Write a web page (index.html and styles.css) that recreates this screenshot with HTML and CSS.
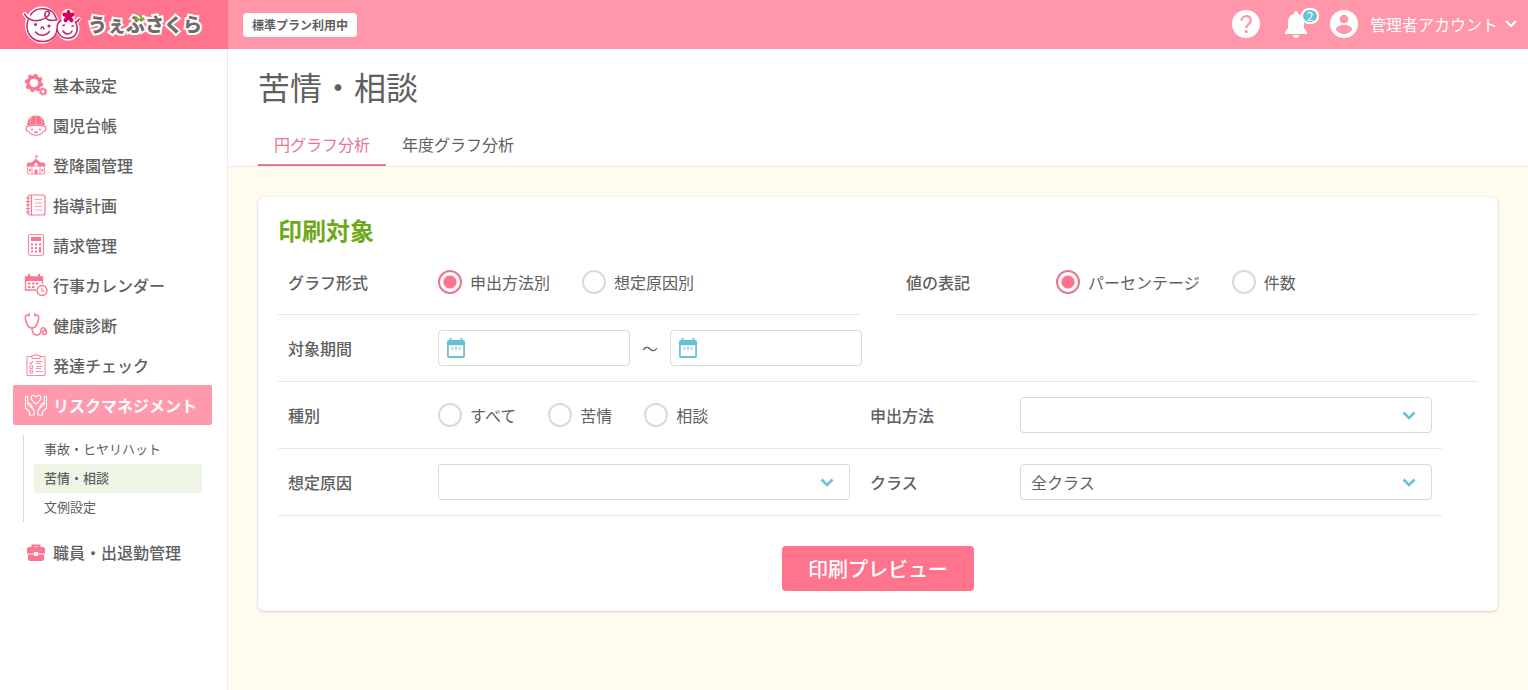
FILE: index.html
```html
<!DOCTYPE html>
<html lang="ja">
<head>
<meta charset="utf-8">
<title>苦情・相談</title>
<link rel="stylesheet" href="styles.css">
</head>
<body>
<header class="topbar">
  <a class="brand" href="#">
    <svg class="brand-mark" viewBox="0 0 60 44" aria-hidden="true">
      <g fill="#fff" stroke="#fff" stroke-width="4" stroke-linejoin="round" stroke-linecap="round">
        <ellipse cx="20" cy="22" rx="15" ry="16.500"/><circle cx="46" cy="26" r="9.500"/><circle cx="46" cy="13" r="5"/>
        <path fill="none" d="M2.500 11c3 4 6 6 9 6M53 19c2 0 3-1 3.500-3"/>
      </g>
      <g fill="none" stroke="#c2266f" stroke-width="1.500" stroke-linecap="round">
        <path d="M2.500 11c3 6 10 8 16 6 6-1.500 10-5 8.500-8-1.500-2-5 0-4 4s6 5 12 4"/>
        <path d="M8.500 12C14 3 31 3 34.500 16M6 17C2 29 10 38.500 20.500 38.500c8 0 14-5 14.500-12"/>
        <path d="M39 18c-4 1-5 7-3 11 4 9 17 8 19-1 .6-3 .2-6-1.500-9 2 0 3-1 3.500-3"/>
        <path d="M13.500 29c4 4.500 10 4.500 14-.5M19 25.500c.5-2 2.500-2 3 .5M41 28c2.500 4 7 4 9 0M41 22.500l1.500-.5M50 23h1.500"/>
      </g>
      <g fill="#c2266f"><circle cx="13.500" cy="21.500" r="1.600"/><circle cx="27" cy="23" r="1.600"/></g>
      <path d="M46.500 13.500V9M46.500 13.500l4.200-2M46.500 13.500l3 3.800M46.500 13.500l-3 3.800M46.500 13.500l-4.200-2" stroke="#d4005f" stroke-width="4" stroke-linecap="round" fill="none"/>
    </svg>
    <span class="brand-name">うぇぶさくら<svg class="brand-accent" viewBox="0 0 12 8" aria-hidden="true"><path d="M6 1.500l3 4M2 3l2 3" stroke="#7fc31c" stroke-width="2.200" stroke-linecap="round"/></svg></span>
  </a>
  <span class="plan">標準プラン利用中</span>
  <div class="tools">
    <button class="tool" type="button" aria-label="ヘルプ">
      <svg viewBox="0 0 28 28" class="ico28"><circle cx="14" cy="14" r="14" fill="#fff"/><path d="M9.500 10.800c0-6.200 9.300-6.100 9.300-.4 0 3.600-4.600 3.800-4.600 7.600" fill="none" stroke="#ff96a9" stroke-width="2.300"/><circle cx="14.200" cy="21.500" r="1.600" fill="#ff96a9"/></svg>
    </button>
    <button class="tool bell" type="button" aria-label="お知らせ">
      <svg viewBox="0 0 24 28" class="ico-bell"><path fill="#fff" d="M12 1c1.300 0 2 .8 2 2v1c4 1 6 4 6 8v6l3 4v2H1v-2l3-4v-6c0-4 2-7 6-8V3c0-1.200.7-2 2-2zM9 25h6c0 4-6 4-6 0z"/></svg>
      <span class="badge">2</span>
    </button>
    <button class="account" type="button">
      <svg viewBox="0 0 28 28" class="ico28" aria-hidden="true"><circle cx="14" cy="14" r="14" fill="#fff"/><circle cx="14" cy="9" r="4.300" fill="#ff96a9"/><path d="M5.500 19c2-3.300 5.500-4.300 8.500-4.300s6.500 1 8.500 4.300c-2 3.300-5 5-8.500 5s-6.500-1.700-8.500-5z" fill="#ff96a9"/></svg>
      <span>管理者アカウント</span>
      <svg viewBox="0 0 14 10" class="ico-caret" aria-hidden="true"><path d="M2 2l5 5 5-5" fill="none" stroke="#fff" stroke-width="2.200"/></svg>
    </button>
  </div>
</header>
<div class="shell">
  <nav class="sidebar">
    <a class="nav" href="#"><svg viewBox="0 0 24 24"><circle cx="10" cy="10" r="6" fill="none" stroke="#fb7590" stroke-width="3.400"/><circle cx="10" cy="10" r="8" fill="none" stroke="#fb7590" stroke-width="2.400" stroke-dasharray="3.280 3"/><circle cx="19" cy="18.500" r="2.500" fill="none" stroke="#fb7590" stroke-width="1.700"/><circle cx="19" cy="18.500" r="3.500" fill="none" stroke="#fb7590" stroke-width="1.200" stroke-dasharray="1.500 1.250"/></svg>基本設定</a>
    <a class="nav" href="#"><svg viewBox="0 0 24 24"><path fill="#fb7590" d="M3 12.500C3.500 5.500 7 2.500 12 2.500s8.500 3 9 10c-6-1.500-12-1.500-18 0z"/><path d="M12 1.500v9M8 3.500C6.500 6 6 8 6 11M16 3.500C17.500 6 18 8 18 11" fill="none" stroke="#ffc0cb" stroke-width=".7"/><path d="M1.500 14c6-2.500 15-2.500 21 0M3 15c-2 0-1 3.500 1.800 3.500 3 5 11.400 5 14.400 0C22 18.500 23 15 21 15" fill="none" stroke="#fb7590" stroke-width="1.100"/><circle cx="8" cy="16.500" r="1.100" fill="#fb7590"/><circle cx="16" cy="16.500" r="1.100" fill="#fb7590"/><path d="M10 18.500h4c0 2.500-4 2.500-4 0z" fill="#fb7590"/></svg>園児台帳</a>
    <a class="nav" href="#"><svg viewBox="0 0 24 24"><path fill="#fb7590" d="M11.500 2l3.500 1.300-2.700 1.200V6l4.200 3.500H20L21.500 12v1.500h-19V12L4 9.500h3.500L11.500 6z"/><path d="M3.500 13.500V21h17v-7.500M8 12v9M16 12v9" fill="none" stroke="#fb8ba1" stroke-width="1"/><circle cx="12" cy="11.500" r="1.800" fill="#fff"/><path fill="#fb7590" d="M10.500 16.500h3V21h-3zM5 16h1.800v2.500H5zM17.500 16h1.800v2.500h-1.800z"/></svg>登降園管理</a>
    <a class="nav" href="#"><svg viewBox="0 0 24 24" fill="none" stroke="#fb7590" stroke-width="1.200"><rect x="4" y="2" width="17" height="20" rx="2"/><path d="M7.500 2v20M2 5h4M2 8.500h4M2 12h4M2 15.500h4M2 19h4"/><path d="M10.500 6.500h7.500M10.500 10h7.500M10.500 13.500h7.500M10.500 17h7.500" stroke="#fca0b0" stroke-width="1"/></svg>指導計画</a>
    <a class="nav" href="#"><svg viewBox="0 0 24 24"><rect x="4.500" y="1.500" width="15" height="21" rx="2" fill="none" stroke="#fb8ba1" stroke-width="1.200"/><path fill="#fb7590" d="M7 4h10v4H7z"/><path d="M8 10.500v9M12 10.500v9" stroke="#fb7590" stroke-width="2" stroke-dasharray="2 1.500"/><path d="M16 10.500v2M16 14v5.500" stroke="#fb7590" stroke-width="2"/></svg>請求管理</a>
    <a class="nav" href="#"><svg viewBox="0 0 24 24"><path fill="none" stroke="#fb7590" stroke-width="1.300" d="M12 17H1.500V4h17v7"/><path fill="#fb7590" d="M1 4h18v4H1zM4 1h2v4H4zM14 1h2v4h-2z"/><path d="M4 10.500h11M4 14h8" stroke="#fb7590" stroke-width="2" stroke-dasharray="2.400 1.500"/><circle cx="18" cy="17.500" r="5" fill="#fff" stroke="#fb7590" stroke-width="1.300"/><path d="M18 14.500v3.500h2.500" fill="none" stroke="#fb7590" stroke-width="1.100"/></svg>行事カレンダー</a>
    <a class="nav" href="#"><svg viewBox="0 0 24 24" fill="none" stroke="#fb7590" stroke-width="1.500" stroke-linecap="round"><path d="M5 2H3C1 2 1 5 2 8c1 4 2 7 6 7s5-3 6-7c1-3 1-6-1-6h-2M8 15c0 9 9 9 9 2 0-3 5-3 5 1"/><circle cx="20.500" cy="19.500" r="2"/><path d="M5 1v2M11 1v2"/></svg>健康診断</a>
    <a class="nav" href="#"><svg viewBox="0 0 24 24" fill="none" stroke="#fb8ba1" stroke-width="1.100"><rect x="3" y="3.500" width="18" height="19" rx="1"/><path fill="#fff" d="M8 5.500v-3h2.500c.5-2 2.500-2 3 0H16v3z"/><path d="M5.500 9.500l1.500 1.500 2-3M12 8.500h6.500M12 10.500h5M12 13.500h6.500M12 15.500h5M12 18.500h6.500"/><path d="M6 13h2.500v2.500H6zM6 17.500h2.500V20H6z"/></svg>発達チェック</a>
    <a class="nav nav-active" href="#"><svg viewBox="0 0 24 24" fill="none" stroke="#fff" stroke-width="1.100" stroke-linejoin="round"><path d="M12 11C9 8.500 7 7 7 4.800 7 2 10.500 1.700 12 4c1.500-2.300 5-2 5 .8 0 2.200-2 3.700-5 6.200z"/><path d="M5.500 22v-3L1.500 15V4.500c0-1.700 2.200-1.700 2.200 0v6.500l5 4.500c1 1 1.500 2 1.500 3.500v3zM4 11c1-1.500 2.500-.5 3 1l1.700 2.500M18.500 22v-3l4-4V4.500c0-1.700-2.200-1.700-2.200 0v6.500l-5 4.500c-1 1-1.500 2-1.500 3.500v3zM20 11c-1-1.500-2.500-.5-3 1l-1.700 2.500"/></svg>リスクマネジメント</a>
    <div class="subnav">
      <a href="#">事故・ヒヤリハット</a>
      <a class="sub-active" href="#">苦情・相談</a>
      <a href="#">文例設定</a>
    </div>
    <a class="nav" href="#"><svg viewBox="0 0 24 24"><path d="M8.500 7.500V5.500h7v2" fill="none" stroke="#fb7590" stroke-width="2"/><path fill="#fb7590" d="M5 7h14a2 2 0 0 1 2 2v4.500h-7V12h-4v1.500H3V9a2 2 0 0 1 2-2zM4 14.500h6V16h4v-1.500h6V19a2 2 0 0 1-2 2H6a2 2 0 0 1-2-2z"/></svg>職員・出退勤管理</a>
  </nav>
  <main class="main">
    <div class="page-head">
      <h1>苦情・相談</h1>
      <div class="tabs">
        <a class="tab tab-on" href="#">円グラフ分析</a>
        <a class="tab" href="#">年度グラフ分析</a>
      </div>
    </div>
    <form class="card">
      <h2>印刷対象</h2>
      <div class="pair pair-split">
        <div class="field" role="radiogroup" aria-labelledby="l1">
          <span class="label" id="l1">グラフ形式</span>
          <div class="options">
            <label><input type="radio" name="type" checked>申出方法別</label>
            <label><input type="radio" name="type">想定原因別</label>
          </div>
        </div>
        <div class="field" role="radiogroup" aria-labelledby="l2">
          <span class="label" id="l2">値の表記</span>
          <div class="options">
            <label><input type="radio" name="unit" checked>パーセンテージ</label>
            <label><input type="radio" name="unit">件数</label>
          </div>
        </div>
      </div>
      <div class="field">
        <label class="label" for="from">対象期間</label>
        <div class="range">
          <div class="date"><svg viewBox="0 0 20 22" aria-hidden="true"><path fill="#6bc0d6" fill-rule="evenodd" d="M3 0h2v2h10V0h2v2h1a2 2 0 0 1 2 2v16a2 2 0 0 1-2 2H2a2 2 0 0 1-2-2V4a2 2 0 0 1 2-2h1zM2 8v12h16V8z"/><path d="M5 11.500h2M9 11.500h2M13 11.500h2" stroke="#6bc0d6" stroke-width="2"/></svg><input id="from" type="text"></div>
          <span class="tilde">～</span>
          <div class="date"><svg viewBox="0 0 20 22" aria-hidden="true"><path fill="#6bc0d6" fill-rule="evenodd" d="M3 0h2v2h10V0h2v2h1a2 2 0 0 1 2 2v16a2 2 0 0 1-2 2H2a2 2 0 0 1-2-2V4a2 2 0 0 1 2-2h1zM2 8v12h16V8z"/><path d="M5 11.500h2M9 11.500h2M13 11.500h2" stroke="#6bc0d6" stroke-width="2"/></svg><input type="text" aria-label="対象期間（終了）"></div>
        </div>
      </div>
      <div class="pair pair-joined">
        <div class="field" role="radiogroup" aria-labelledby="l3">
          <span class="label" id="l3">種別</span>
          <div class="options">
            <label><input type="radio" name="kind">すべて</label>
            <label><input type="radio" name="kind">苦情</label>
            <label><input type="radio" name="kind">相談</label>
          </div>
        </div>
        <div class="field">
          <label class="label" for="method">申出方法</label>
          <div class="select"><select id="method"><option></option></select><svg viewBox="0 0 14 10" aria-hidden="true"><path d="M1.500 1.500L7 7l5.500-5.500" fill="none" stroke="#6bc0d6" stroke-width="2.600"/></svg></div>
        </div>
      </div>
      <div class="pair pair-joined">
        <div class="field">
          <label class="label" for="cause">想定原因</label>
          <div class="select"><select id="cause"><option></option></select><svg viewBox="0 0 14 10" aria-hidden="true"><path d="M1.500 1.500L7 7l5.500-5.500" fill="none" stroke="#6bc0d6" stroke-width="2.600"/></svg></div>
        </div>
        <div class="field">
          <label class="label" for="class">クラス</label>
          <div class="select"><select id="class"><option>全クラス</option></select><svg viewBox="0 0 14 10" aria-hidden="true"><path d="M1.500 1.500L7 7l5.500-5.500" fill="none" stroke="#6bc0d6" stroke-width="2.600"/></svg></div>
        </div>
      </div>
      <div class="actions"><button class="primary" type="button">印刷プレビュー</button></div>
    </form>
  </main>
</div>
</body>
</html>
```
FILE: styles.css
```css
* { box-sizing: border-box; }
body {
  margin: 0;
  min-height: 100vh;
  display: flex;
  flex-direction: column;
  font: 400 16px/24px "Noto Sans CJK JP", sans-serif;
  color: #5f6060;
  background: #fffbee;
}
a { color: inherit; text-decoration: none; }
button, input, select { font: inherit; color: inherit; }
svg { display: block; flex: none; }

.topbar { display: flex; align-items: center; height: 49px; background: #ff96a9; }
.brand {
  display: flex;
  align-items: center;
  gap: 6px;
  width: 228px;
  height: 100%;
  padding-left: 22px;
  background: #ff738d;
}
.brand-mark { width: 60px; height: 44px; }
.brand-name {
  position: relative;
  padding-bottom: 2px;
  font-size: 19px;
  font-weight: 900;
  color: #716b6b;
  -webkit-text-stroke: 4px #fff;
  paint-order: stroke fill;
}
.brand-accent { position: absolute; left: 46px; top: 2px; width: 12px; height: 8px; }
.plan {
  margin-left: 15px;
  padding: 0 9px;
  border-radius: 4px;
  background: #fff;
  font-size: 12px;
  font-weight: 700;
}
.tools { display: flex; align-items: center; margin-left: auto; padding: 0 10px 2px 0; }
.tool, .account { display: flex; align-items: center; padding: 0; border: 0; background: none; color: #fff; }
.ico28 { width: 28px; height: 28px; }
.bell { position: relative; margin: 0 22px 0 24px; }
.ico-bell { width: 24px; height: 28px; }
.badge {
  position: absolute;
  top: -2px;
  right: -11px;
  width: 18px;
  height: 16px;
  border: 2px solid #fff;
  border-radius: 8px;
  background: #6bc0d6;
  font-size: 12px;
  line-height: 12px;
}
.account { gap: 12px; }
.ico-caret { width: 14px; height: 10px; margin-left: -6px; }

.shell { display: flex; flex: 1; }
.sidebar { width: 228px; flex: none; padding: 16px 15px 16px 13px; border-right: 1px solid #eceae4; background: #fff; }
.nav { display: flex; align-items: center; gap: 5px; height: 40px; padding-left: 11px; border-radius: 2px; font-weight: 500; }
.nav svg { width: 24px; height: 24px; }
.nav-active { background: #ff9aad; color: #fff; font-weight: 700; }
.subnav { margin: 10px; padding-left: 10px; border-left: 1px solid #d9d9d9; font-size: 13px; }
.subnav a { display: block; padding: 0 0 2px 10px; line-height: 27px; }
.subnav .sub-active { background: #f0f6e6; font-weight: 500; }

.main { flex: 1; min-width: 0; }
.page-head { padding: 13px 30px 0; border-bottom: 1px solid #eceae4; background: #fff; }
h1 { margin: 0; font-size: 32px; line-height: 48px; font-weight: 400; }
.tabs { display: flex; margin-top: 14px; }
.tab { padding: 8px 16px; border-bottom: 2px solid transparent; }
.tab-on { border-color: #e8778f; color: #e8778f; }

.card {
  margin: 30px;
  padding: 20px;
  border-radius: 6px;
  background: #fff;
  box-shadow: 0 0 2px #d8d5ca, 0 1px 2px #d8d5ca;
}
h2 { margin: 0 0 7px; font-size: 24px; line-height: 26px; font-weight: 700; color: #6ea91b; }
.field { display: flex; align-items: center; min-height: 67px; padding: 0 10px; border-bottom: 1px solid #e7e7e7; }
.pair { display: grid; grid-template-columns: 1fr 1fr; }
.pair-split { column-gap: 36px; }
.pair-split .field { min-height: 65px; }
.pair-joined { margin-right: 36px; }
.label { flex: none; width: 150px; font-weight: 500; }
.options { display: flex; gap: 32px; }
.options label { display: flex; align-items: center; gap: 8px; }
.options input {
  appearance: none;
  width: 24px;
  height: 24px;
  margin: 0;
  border: 2px solid #dadada;
  border-radius: 50%;
}
.options input:checked { border-color: #e8778f; background: radial-gradient(circle, #ff738d 6px, #fff 7px); }
.range { display: flex; align-items: center; }
.tilde { width: 40px; text-align: center; }
.date { display: flex; align-items: center; width: 192px; height: 36px; padding: 0 8px; border: 1px solid #d9d9d9; border-radius: 4px; }
.date svg { width: 18px; height: 20px; }
.date input { flex: 1; min-width: 0; padding: 0 8px; border: 0; outline: 0; background: none; }
.select { position: relative; flex: 1; }
.select select {
  appearance: none;
  display: block;
  width: 100%;
  height: 36px;
  padding: 0 40px 0 10px;
  border: 1px solid #d9d9d9;
  border-radius: 4px;
  background: #fff;
}
.select svg { position: absolute; right: 16px; top: 14px; width: 14px; height: 10px; pointer-events: none; }
.actions { display: flex; justify-content: center; padding-top: 30px; }
.primary { min-width: 192px; height: 45px; border: 0; border-radius: 4px; background: #ff738d; color: #fff; font-size: 20px; font-weight: 500; }
```
